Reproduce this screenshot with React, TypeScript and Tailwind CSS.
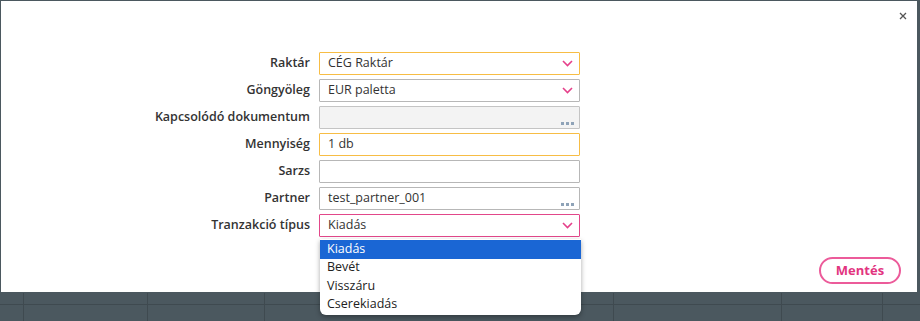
import React from "react";

const fields = [
  { label: "Raktár", value: "CÉG Raktár", kind: "select", tone: "orange" },
  { label: "Göngyöleg", value: "EUR paletta", kind: "select", tone: "gray" },
  { label: "Kapcsolódó dokumentum", value: "", kind: "lookup", tone: "disabled" },
  { label: "Mennyiség", value: "1 db", kind: "text", tone: "orange" },
  { label: "Sarzs", value: "", kind: "text", tone: "gray" },
  { label: "Partner", value: "test_partner_001", kind: "lookup", tone: "gray" },
  { label: "Tranzakció típus", value: "Kiadás", kind: "select", tone: "pink" },
];

const options = ["Kiadás", "Bevét", "Visszáru", "Cserekiadás"];

const Chevron = () => (
  <svg width="11" height="7" viewBox="0 0 11 7" className="shrink-0">
    <path d="M1 1l4.5 4.5L10 1" fill="none" stroke="#e5408a" strokeWidth="1.6" />
  </svg>
);

const Dots = () => (
  <span className="absolute right-[5px] bottom-[3px] flex gap-[2px]">
    <span className="w-[3px] h-[3px] bg-[#8fa3b8]" />
    <span className="w-[3px] h-[3px] bg-[#8fa3b8]" />
    <span className="w-[3px] h-[3px] bg-[#8fa3b8]" />
  </span>
);

const toneClass: Record<string, string> = {
  orange: "border-[#f7bd45] bg-white",
  gray: "border-[#b7b7b7] bg-white",
  disabled: "border-[#c4c4c4] bg-[#f3f3f3]",
  pink: "border-[#e2478a] bg-white",
};

export default function App() {
  return (
    <div
      className="w-[920px] h-[321px] bg-[#4b585f] flex flex-col overflow-hidden"
      style={{ fontFamily: '"Open Sans", "Noto Sans", sans-serif' }}
    >
      <div className="mx-px mt-px w-[916px] h-[291px] bg-white flex flex-col shrink-0">
        <div className="h-[51px] flex justify-end items-start pt-[11px] pr-[10px]">
          <svg width="8" height="8" viewBox="0 0 8 8">
            <path d="M1 1l6 6M7 1l-6 6" stroke="#555" strokeWidth="1.3" />
          </svg>
        </div>

        <div className="grid grid-cols-[309px_261px] gap-x-[9px] gap-y-[4px]">
          {fields.map((f, i) => (
            <React.Fragment key={i}>
              <div className="h-[23px] flex items-center justify-end text-[12.5px] font-semibold text-[#333]">
                {f.label}
              </div>
              <div
                className={`relative h-[23px] border rounded-[1px] flex items-center pl-[8px] pr-[6px] text-[12.5px] text-[#333] ${toneClass[f.tone]}`}
              >
                <span className="flex-1">{f.value}</span>
                {f.kind === "select" && <Chevron />}
                {f.kind === "lookup" && <Dots />}
                {i === fields.length - 1 && (
                  <div className="absolute left-0 top-[24px] w-[261px] bg-white rounded-b-[6px] shadow-[0_2px_5px_rgba(0,0,0,0.35)] py-px z-10">
                    {options.map((o, j) => (
                      <div
                        key={o}
                        className={`h-[18.5px] flex items-center pl-[7px] text-[12.5px] ${
                          j === 0 ? "bg-[#1a66d4] text-white" : "text-[#222]"
                        }`}
                      >
                        {o}
                      </div>
                    ))}
                  </div>
                )}
              </div>
            </React.Fragment>
          ))}
        </div>

        <div className="flex justify-end pr-[16px] mt-[20px]">
          <button className="w-[82px] h-[27px] rounded-full border-2 border-[#ec5b9a] text-[#e2357f] text-[13px] font-bold">
            Mentés
          </button>
        </div>
      </div>

      <div className="flex h-[12px] border-b border-[#3f4a50] mt-px">
        <div className="w-[24px] border-r border-[#3f4a50]" />
        <div className="w-[124px] border-r border-[#3f4a50]" />
        <div className="w-[117px] border-r border-[#3f4a50]" />
        <div className="w-[349px] border-r border-[#3f4a50]" />
        <div className="w-[168px] border-r border-[#3f4a50]" />
        <div className="w-[101px] border-r border-[#3f4a50]" />
      </div>
      <div className="flex flex-1">
        <div className="w-[24px] border-r border-[#3f4a50]" />
        <div className="w-[124px] border-r border-[#3f4a50]" />
        <div className="w-[117px] border-r border-[#3f4a50]" />
        <div className="w-[349px] border-r border-[#3f4a50]" />
        <div className="w-[168px] border-r border-[#3f4a50]" />
        <div className="w-[101px] border-r border-[#3f4a50]" />
      </div>
    </div>
  );
}
